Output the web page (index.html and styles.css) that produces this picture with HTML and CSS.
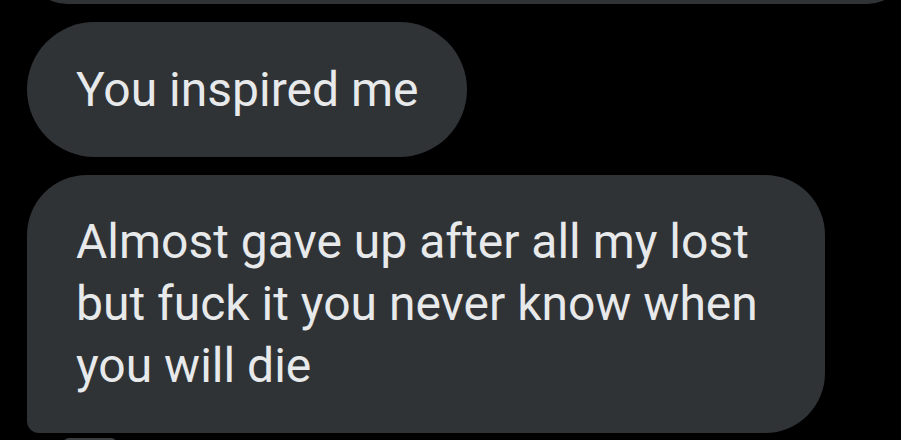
FILE: index.html
```html
<!DOCTYPE html>
<html lang="en">
<head>
<meta charset="utf-8">
<link rel="stylesheet" href="styles.css">
</head>
<body>
<div class="thread">
  <div class="bubble prev"></div>
  <div class="bubble round">You inspired me</div>
  <div class="bubble last">Almost gave up after all my lost<br>but fuck it you never know when<br>you will die</div>
  <div class="reaction"></div>
</div>
</body>
</html>
```
FILE: styles.css
```css
html, body {
  margin: 0;
  padding: 0;
  background: #000;
  width: 901px;
  height: 440px;
  overflow: hidden;
}
.thread {
  display: flex;
  flex-direction: column;
  align-items: flex-start;
  gap: 18px;
  padding-left: 27px;
  font-family: Roboto, "Noto Sans", sans-serif;
  color: #e7e9ea;
  font-size: 48px;
}
.bubble {
  background: #2f3336;
  box-sizing: border-box;
  white-space: nowrap;
}
.prev {
  width: 880px;
  height: 80px;
  margin-top: -76px;
  border-radius: 40px;
}
.round {
  height: 135px;
  line-height: 135px;
  padding: 0 49px;
  border-radius: 68px;
}
.last {
  width: 798px;
  padding: 36px 49px;
  line-height: 62px;
  border-radius: 60px 60px 60px 12px;
}
.reaction {
  margin-top: -13px;
  margin-left: 36px;
  width: 54px;
  height: 10px;
  border-radius: 6px 6px 0 0;
  background: #3a3e41;
}
```
